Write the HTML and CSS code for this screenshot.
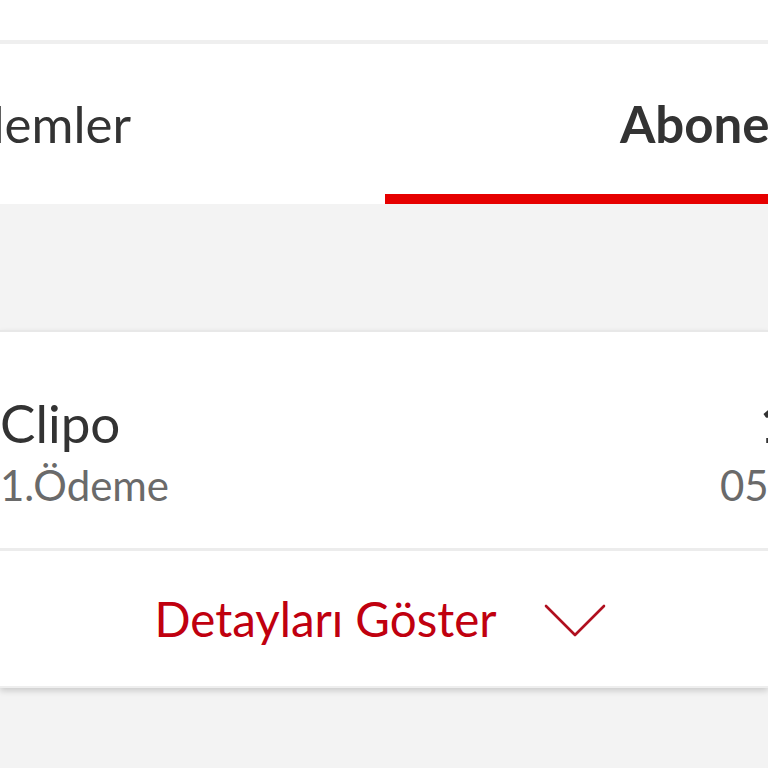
FILE: index.html
```html
<!DOCTYPE html>
<html lang="tr">
<head>
<meta charset="utf-8">
<title>Abonelikler</title>
<link rel="stylesheet" href="styles.css">
</head>
<body>
<div class="top"></div>
<div class="sep"></div>
<nav class="tabs">
  <div class="tab tab-left"><span>lemler</span></div>
  <div class="tab tab-active">Abonelikler</div>
</nav>
<main class="content">
  <section class="card">
    <div class="card-main">
      <div class="info">
        <div class="name">Clipo</div>
        <div class="sub">1.Ödeme</div>
      </div>
      <div class="meta">
        <div class="amount">10,00 TL</div>
        <div class="date">05.03.2021</div>
      </div>
    </div>
    <div class="card-footer">
      <span class="details">Detayları Göster</span>
      <svg class="chevron" width="62" height="34" viewBox="0 0 62 34" aria-hidden="true">
        <path d="M2 2 L31 31 L60 2" fill="none" stroke="#b0101f" stroke-width="2.6" stroke-linecap="round" stroke-linejoin="round"/>
      </svg>
    </div>
  </section>
</main>
</body>
</html>
```
FILE: styles.css
```css
html, body {
  margin: 0;
  padding: 0;
  overflow: hidden;
}
body {
  width: 768px;
  height: 768px;
  background: #f3f3f3;
  font-family: Lato, "Liberation Sans", sans-serif;
  color: #333333;
}
.top {
  height: 40px;
  background: #ffffff;
}
.sep {
  height: 4px;
  background: #efefef;
}
.tabs {
  display: grid;
  grid-template-columns: 385px 1fr;
  height: 160px;
  background: #ffffff;
}
.tab {
  box-sizing: border-box;
  padding-top: 50px;
  font-size: 51px;
  line-height: 60px;
  white-space: nowrap;
  overflow: hidden;
}
.tab-left {
  display: flex;
  justify-content: flex-end;
  align-items: flex-start;
  padding-right: 254px;
}
.tab-left span {
  flex: none;
}
.tab-active {
  font-weight: 700;
  padding-left: 235px;
  border-bottom: 10px solid #e60000;
}
.content {
  padding-top: 126px;
}
.card {
  background: #ffffff;
  border-top: 2px solid #e8e8e8;
  border-bottom: 2px solid #eeeeee;
  box-shadow: 0 3px 6px rgba(0, 0, 0, 0.16);
}
.card-main {
  height: 219px;
  box-sizing: border-box;
  padding-top: 59px;
  display: flex;
  justify-content: space-between;
  border-bottom: 3px solid #ececec;
}
.name {
  font-size: 53px;
  line-height: 64px;
  color: #333333;
}
.sub {
  margin-top: 5px;
  font-size: 42px;
  line-height: 50px;
  color: #6a6a6a;
}
.meta {
  width: 48px;
  white-space: nowrap;
}
.amount {
  padding-left: 40px;
  font-size: 53px;
  line-height: 64px;
  font-weight: 700;
  color: #333333;
}
.date {
  margin-top: 5px;
  font-size: 42px;
  line-height: 50px;
  color: #6a6a6a;
}
.card-footer {
  height: 135px;
  display: flex;
  align-items: center;
  justify-content: center;
  gap: 47px;
  padding-right: 8px;
}
.details {
  font-size: 47.5px;
  line-height: 56px;
  color: #c0000f;
}
.chevron {
  margin-top: 4px;
}
```
